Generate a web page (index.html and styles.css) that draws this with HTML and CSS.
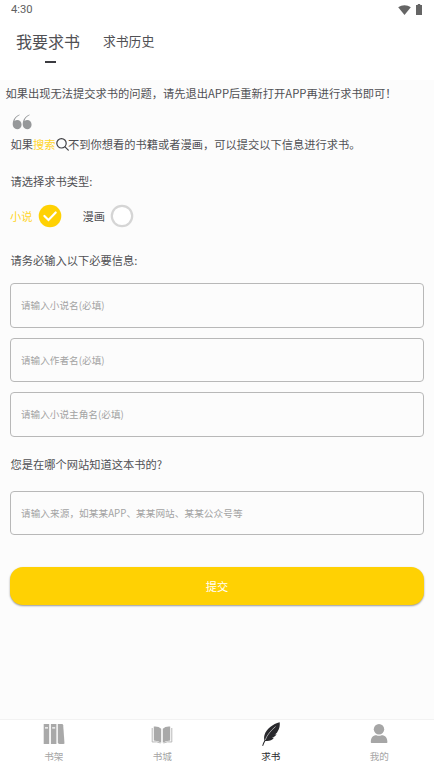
FILE: index.html
```html
<!DOCTYPE html>
<html lang="zh-CN">
<head>
<meta charset="utf-8">
<title>我要求书</title>
<link rel="stylesheet" href="styles.css">
</head>
<body>
<div class="app">
  <header class="header">
    <div class="status">
      <span>4:30</span>
      <span class="status-icons">
        <svg width="13" height="10" viewBox="0 0 13 10"><path fill="#656565" d="M.2 2.3C3.8-.5 9.2-.5 12.8 2.3L6.5 10z"/></svg>
        <svg width="6" height="11" viewBox="0 0 6 11"><path fill="#656565" d="M1.8 0h2.400v1H6v10H0V1h1.800z"/></svg>
      </span>
    </div>
    <nav class="tabs">
      <a class="tab tab-active">我要求书</a>
      <a class="tab">求书历史</a>
    </nav>
  </header>
  <main class="content">
    <p class="notice">如果出现无法提交求书的问题，请先退出APP后重新打开APP再进行求书即可！</p>
    <svg class="quote" width="20" height="16" viewBox="0 0 20 16" fill="#96989a"><path id="q" d="M7.500.5C3 2.200.7 6 .7 10.600c0 2.700 1.900 4.700 4.400 4.700s4.500-2 4.500-4.600-1.900-4.600-4.400-4.600c-1 0-1.900.3-2.700.8C3.200 4.500 4.800 2.500 7.700 1.100z"/><use href="#q" x="10"/></svg>
    <p class="hint"><span>如果</span><span class="yellow">搜索</span><svg width="13" height="13" viewBox="0 0 13 13" fill="none" stroke="#3f3f43" stroke-width="1.200" stroke-linecap="round"><circle cx="5.500" cy="5.300" r="4.700"/><path d="M9 8.800l3.300 3.300"/></svg><span>不到你想看的书籍或者漫画，可以提交以下信息进行求书。</span></p>
    <h2 class="label label-type">请选择求书类型:</h2>
    <div class="types">
      <span class="type yellow">小说<svg width="24" height="24" viewBox="0 0 24 24"><circle cx="12" cy="12" r="11.300" fill="#ffd103"/><path d="M6.400 12l4.100 4 7.200-7.500" fill="none" stroke="#fff" stroke-width="2.200" stroke-linecap="round"/></svg></span>
      <span class="type">漫画<svg width="24" height="24" viewBox="0 0 24 24"><circle cx="12" cy="12" r="10.200" fill="#fff" stroke="#d5d5d5" stroke-width="2.200"/></svg></span>
    </div>
    <h2 class="label label-info">请务必输入以下必要信息:</h2>
    <div class="fields">
      <input class="field" placeholder="请输入小说名(必填)">
      <input class="field" placeholder="请输入作者名(必填)">
      <input class="field" placeholder="请输入小说主角名(必填)">
    </div>
    <h2 class="label label-source">您是在哪个网站知道这本书的?</h2>
    <input class="field field-source" placeholder="请输入来源，如某某APP、某某网站、某某公众号等">
    <button class="submit">提交</button>
  </main>
  <nav class="bottom">
    <a class="item">
      <svg width="24" height="24" viewBox="0 0 24 24" fill="#a9a9a9"><path fill-rule="evenodd" d="M1.700 2h5.500v20H1.700zM3 5.300v1.200h3V5.300zM8.900 2h5.500v20H8.900zM10.200 5.300v1.200h3V5.300z"/><path d="M15.800 2h4q1.300 0 1.400 1.300l1.300 18.200-1 .5h-4q-1.700 0-1.700-1.700z"/></svg>
      <span>书架</span>
    </a>
    <a class="item">
      <svg width="24" height="24" viewBox="0 0 24 24"><path fill="#a9a9a9" d="M3.800 4.500Q8.500 4 11.200 6.700v14Q8.500 18.700 3.800 18.500zM20.200 4.500Q15.500 4 12.800 6.700v14Q15.500 18.700 20.200 18.500z"/><path fill="none" stroke="#b8b8b8" d="M2.200 6v14Q7 19.200 10.500 21M21.800 6v14Q17 19.200 13.500 21"/></svg>
      <span>书城</span>
    </a>
    <a class="item item-active">
      <svg width="24" height="24" viewBox="0 0 24 24"><path fill="#29292d" d="M20.700.3C14 1.800 7.200 7.300 5.500 13c-.6 2-.5 3.700-.1 5.400C4.400 20.200 3.700 21.800 3.200 23.800l.9.200c.7-2 1.400-3.600 2.300-5.100 3.400.5 6.700-.5 8.600-3.200l-2.200.2c2.100-.7 3.600-1.800 4.800-3.600l-2.100.2c1.500-.7 2.500-1.600 3.100-3C20.600 6.600 21 3.700 20.700.3z"/><path d="M6.200 18C8.200 13 11.500 8.800 16.600 4.500" fill="none" stroke="#d5d5d5" stroke-width=".7"/></svg>
      <span>求书</span>
    </a>
    <a class="item">
      <svg width="24" height="24" viewBox="0 0 24 24" fill="#a6a6a6"><circle cx="12" cy="7.200" r="5.200"/><path d="M3.800 20.300c0-4.600 2-7 5.600-7 1.700.7 3.500.7 5.200 0 3.600 0 5.800 2.400 5.800 7q0 .7-.7.700H4.500q-.7 0-.7-.7z"/></svg>
      <span>我的</span>
    </a>
  </nav>
</div>
</body>
</html>
```
FILE: styles.css
```css
* { box-sizing: border-box; }

body {
  margin: 0;
  font-family: "Noto Sans CJK SC", sans-serif;
  font-size: 11.25px;
  color: #505054;
}

.app {
  display: flex;
  flex-direction: column;
  height: 772px;
  background: #fcfcfc;
}

svg { display: block; flex: none; }

.header { height: 80px; background: #fff; }

.status {
  display: flex;
  justify-content: space-between;
  align-items: center;
  height: 19px;
  padding: 0 12px 0 11px;
  font-family: Roboto, sans-serif;
  font-size: 11.2px;
  color: #606060;
}

.status-icons { display: flex; align-items: center; gap: 5px; }

.tabs {
  display: flex;
  align-items: flex-start;
  gap: 23px;
  padding-left: 16px;
}

.tab { font-size: 12.8px; line-height: 44px; }

.tab-active { font-size: 16px; }

.tab-active::after {
  content: "";
  display: block;
  width: 11px;
  height: 2px;
  margin: -2px auto 0;
  background: #3b3b40;
  transform: translateX(2px);
}

.content { flex: 1; padding: 0 10px; }

p, h2 { margin: 0; font-size: inherit; font-weight: 400; white-space: nowrap; }

.notice { margin: 4px -5px 0 -4.500px; line-height: 18px; }

.quote { margin: 12px 0 0 2px; }

.hint {
  display: flex;
  align-items: center;
  height: 18px;
  margin-top: 5px;
  padding-left: .5px;
}

.hint svg { margin-right: -.5px; }

.yellow { color: #ffd52b; }

.label { padding-left: .5px; line-height: 18px; }

.label-type { margin-top: 19px; }

.types { display: flex; gap: 21px; height: 24px; margin: 14px 0 0; }

.type { display: flex; align-items: center; gap: 5px; }

.label-info { margin-top: 23px; }

.fields { display: flex; flex-direction: column; gap: 10px; margin-top: 14px; }

.field {
  display: block;
  width: 100%;
  height: 44.6px;
  padding: 0 10px;
  border: 1px solid #b8b8b8;
  border-radius: 4px;
  background: transparent;
  font: inherit;
  font-size: 9.65px;
}

.field-source { letter-spacing: .06px; }

.field::placeholder { color: #a3a3a3; }

.label-source { margin: 18px 0; }

.submit {
  display: block;
  width: 100%;
  height: 38px;
  margin-top: 31.500px;
  padding: 0;
  border: 0;
  border-radius: 13px;
  background: #ffd103;
  box-shadow: 0 1px 2px rgba(0, 0, 0, .4);
  color: #fff;
  font: inherit;
}

.bottom {
  display: grid;
  grid-template-columns: repeat(4, 1fr);
  height: 53px;
  border-top: 1px solid #f2f2f2;
  background: #fff;
}

.item {
  display: flex;
  flex-direction: column;
  align-items: center;
  gap: 3px;
  padding: 2px 1px 0 0;
  font-size: 9.6px;
  line-height: 14px;
  color: #a5a5a5;
}

.item-active { color: #29292d; }
```
